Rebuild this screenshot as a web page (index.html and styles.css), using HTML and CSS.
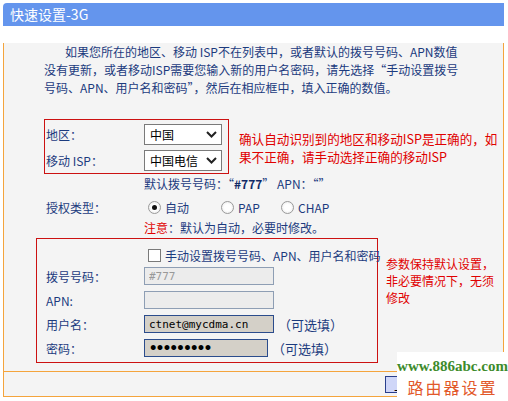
FILE: index.html
```html
<!DOCTYPE html>
<html lang="zh-cn">
<head>
    <meta charset="UTF-8">
    <title>快速设置-3G</title>
    <link rel="stylesheet" href="styles.css">
</head>
<body>
<div class="page">
    <div class="title">快速设置-3G</div>

    <div class="panel">
        <p class="intro">如果您所在的地区、移动 ISP不在列表中，或者默认的拨号号码、APN数值<br>没有更新，或者移动ISP需要您输入新的用户名密码，请先选择“手动设置拨号<br>号码、APN、用户名和密码”，然后在相应框中，填入正确的数值。</p>

        <!-- 地区 / ISP -->
        <div class="block block-isp">
            <div class="redbox box-isp">
                <div class="row row-sel">
                    <span class="label">地区：</span>
                    <div class="select">
                        <span>中国</span>
                        <svg width="11" height="7" viewBox="0 0 11 7"><path d="M1 1 L5.5 5.5 L10 1" fill="none" stroke="#222" stroke-width="2"/></svg>
                    </div>
                </div>
                <div class="row row-sel">
                    <span class="label">移动 ISP：</span>
                    <div class="select">
                        <span>中国电信</span>
                        <svg width="11" height="7" viewBox="0 0 11 7"><path d="M1 1 L5.5 5.5 L10 1" fill="none" stroke="#222" stroke-width="2"/></svg>
                    </div>
                </div>
            </div>
            <p class="tip tip-isp">确认自动识别到的地区和移动ISP是正确的，如<br>果不正确，请手动选择正确的移动ISP</p>
        </div>

        <div class="line line-default">默认拨号号码：“<b>#777</b>” APN：“”</div>

        <div class="row row-auth">
            <span class="label">授权类型：</span>
            <label class="opt opt-1"><span class="radio checked"></span>自动</label>
            <label class="opt opt-2"><span class="radio"></span>PAP</label>
            <label class="opt"><span class="radio"></span>CHAP</label>
        </div>

        <div class="line line-note"><span class="red">注意</span>：默认为自动，必要时修改。</div>

        <!-- 拨号参数 -->
        <div class="block block-dial">
            <div class="redbox box-dial">
                <div class="check-row">
                    <span class="checkbox"></span>手动设置拨号号码、APN、用户名和密码
                </div>
                <div class="row row-in">
                    <span class="label">拨号号码：</span>
                    <input class="field disabled" type="text" placeholder="#777" disabled>
                </div>
                <div class="row row-in">
                    <span class="label">APN:</span>
                    <input class="field disabled" type="text" disabled>
                </div>
                <div class="row row-in">
                    <span class="label">用户名：</span>
                    <input class="field filled" type="text" value="ctnet@mycdma.cn">
                    <span class="optional">（可选填）</span>
                </div>
                <div class="row row-in">
                    <span class="label">密码：</span>
                    <input class="field filled pass" type="password" value="123456789">
                    <span class="optional">（可选填）</span>
                </div>
            </div>
            <p class="tip tip-dial">参数保持默认设置，<br>非必要情况下，无须<br>修改</p>
        </div>

        <div class="buttons">
            <button class="btn">上一步</button>
        </div>
    </div>

    <div class="watermark">
        <div class="wm-url">www.886abc.com</div>
        <div class="wm-name">路由器设置</div>
    </div>
</div>
</body>
</html>
```

FILE: styles.css
```css
* {
    margin: 0;
    padding: 0;
    box-sizing: border-box;
}

body {
    font-family: "Noto Sans CJK SC", "DejaVu Sans", sans-serif;
    font-size: 12px;
    color: #1c3b7e;
    background-color: #fff;
}

.page {
    position: relative;
    width: 501px;
    margin: 3px 0 0 3px;
}

/* Barra de título */
.title {
    height: 23px;
    line-height: 23px;
    padding-left: 7px;
    font-size: 14px;
    color: #fff;
    background-color: #6495ed;
    border-radius: 4px 0 0 0;
}

.panel {
    background-color: #f4f4f4;
    border-left: 1px solid #f4a43c;
    border-right: 1px solid #f4a43c;
    border-bottom: 1px solid #f4a43c;
}

.intro {
    margin: 17px 0 0 40px;
    line-height: 18px;
    text-indent: 21px;
    white-space: nowrap;
}

.block {
    display: flex;
    align-items: flex-start;
}

.block-isp {
    margin-top: 22px;
}

.block-dial {
    margin-top: 2px;
}

.redbox {
    border: 1px solid #cc1111;
}

.box-isp {
    margin-left: 40px;
    padding: 4px 6px 2px 1px;
}

.box-dial {
    margin-left: 32px;
    width: 342px;
    padding: 7px 0 2px 9px;
}

.tip {
    color: #e00000;
    white-space: nowrap;
}

.tip-isp {
    font-size: 12.6px;
    line-height: 18px;
    margin: 11px 0 0 10px;
}

.tip-dial {
    font-size: 12px;
    line-height: 17px;
    margin: 17px 0 0 8px;
}

.row {
    display: flex;
    align-items: center;
}

.row-sel + .row-sel {
    margin-top: 5px;
}

.label {
    width: 98px;
    flex-shrink: 0;
}

/* Select falso */
.select {
    width: 78px;
    height: 21px;
    display: flex;
    align-items: center;
    justify-content: space-between;
    padding: 0 4px 0 5px;
    font-size: 12px;
    color: #000;
    background-color: #fff;
    border: 1px solid #7a7a7a;
}

.line {
    padding-left: 140px;
}

.line-default {
    height: 20px;
    line-height: 20px;
}

.line-default b {
    color: #102a66;
}

.line-note {
    height: 16px;
    line-height: 16px;
}

.red {
    color: #e00000;
}

.row-auth {
    height: 26px;
    padding-left: 42px;
}

.opt {
    display: flex;
    align-items: center;
    margin-left: 4px;
}

.opt-1 {
    width: 69px;
}

.opt-2 {
    width: 56px;
}

.radio {
    width: 13px;
    height: 13px;
    margin-right: 4px;
    border-radius: 50%;
    border: 1px solid #9a9a9a;
    background: radial-gradient(circle, #fff 40%, #e4e4e4 100%);
    position: relative;
}

.radio.checked::after {
    content: "";
    position: absolute;
    left: 3px;
    top: 3px;
    width: 5px;
    height: 5px;
    border-radius: 50%;
    background-color: #111;
}

.check-row {
    height: 18px;
    display: flex;
    align-items: center;
    padding-left: 102px;
    white-space: nowrap;
}

.checkbox {
    width: 13px;
    height: 13px;
    margin-right: 4px;
    flex-shrink: 0;
    border: 1px solid #7a7a7a;
    background-color: #fff;
}

.row-in {
    height: 24px;
}

.field {
    width: 130px;
    height: 18px;
    padding: 0 4px;
    font-family: "DejaVu Sans Mono", monospace;
    font-size: 11px;
    color: #000;
    outline: none;
}

.field.disabled {
    background-color: #ececec;
    border: 1px solid #8e9eb4;
}

.field.disabled::placeholder {
    color: #999;
}

.field.filled {
    background-color: #d4d0c8;
    border: 1px solid #2b4c8c;
}

.field.pass {
    width: 124px;
    font-size: 14px;
    font-weight: bold;
    letter-spacing: -1.6px;
}

.optional {
    margin-left: 4px;
    font-size: 13px;
    white-space: nowrap;
}

/* Botões */
.buttons {
    margin-top: 8px;
    height: 25px;
    border-top: 1px solid #f4a43c;
    display: flex;
    align-items: center;
    padding-left: 381px;
}

.btn {
    height: 17px;
    padding: 0 8px;
    font-family: inherit;
    font-size: 13px;
    line-height: 15px;
    color: #000;
    background-color: #cfd6f8;
    border: 1px solid #2a3f8c;
}

/* Marca d'água */
.watermark {
    position: absolute;
    left: 394px;
    top: 349px;
    width: 111px;
    height: 49px;
    background-color: #fff;
    text-align: center;
    padding-top: 5px;
}

.wm-url {
    font-family: "Liberation Serif", serif;
    font-weight: bold;
    font-size: 15px;
    line-height: 18px;
    color: #3d8b2c;
}

.wm-name {
    margin-top: 2px;
    font-size: 16px;
    line-height: 20px;
    letter-spacing: 2px;
    color: #e2582a;
}
```
